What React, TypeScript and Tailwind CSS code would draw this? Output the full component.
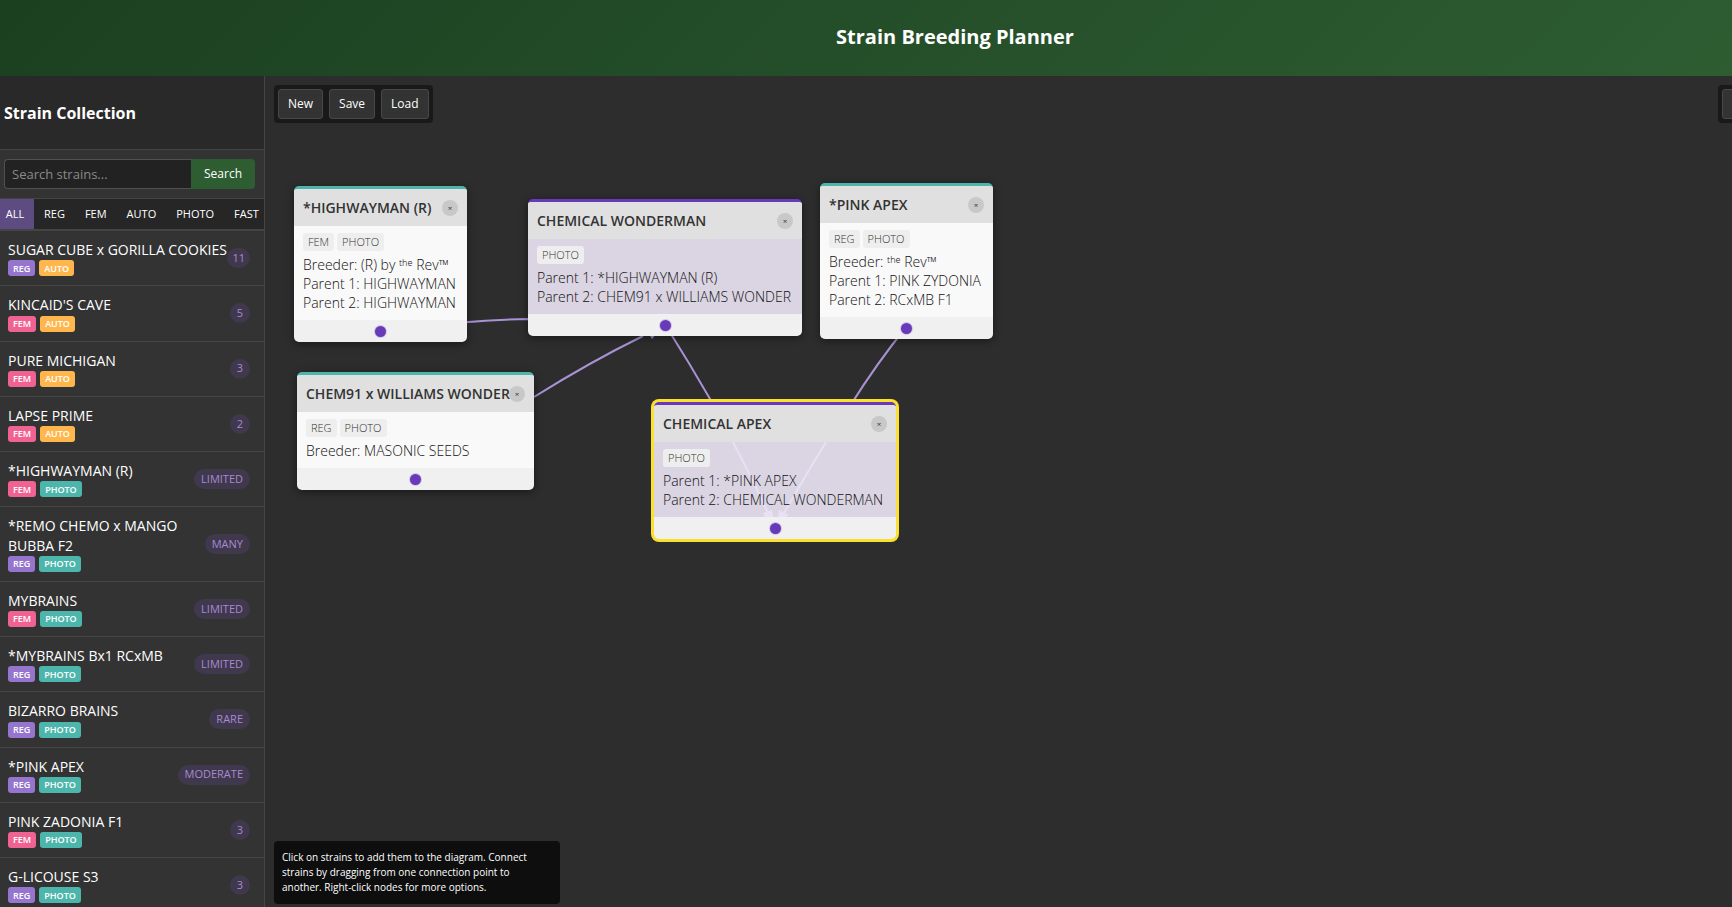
import React from "react";

type Kind = "REG" | "FEM" | "AUTO" | "PHOTO";

const tagColor: Record<Kind, string> = {
  REG: "bg-[#9575cd]",
  FEM: "bg-[#f06292]",
  AUTO: "bg-[#ffb74d]",
  PHOTO: "bg-[#4db6ac]",
};

const strains: { name: string; tags: Kind[]; stock: string }[] = [
  { name: "SUGAR CUBE x GORILLA COOKIES", tags: ["REG", "AUTO"], stock: "11" },
  { name: "KINCAID'S CAVE", tags: ["FEM", "AUTO"], stock: "5" },
  { name: "PURE MICHIGAN", tags: ["FEM", "AUTO"], stock: "3" },
  { name: "LAPSE PRIME", tags: ["FEM", "AUTO"], stock: "2" },
  { name: "*HIGHWAYMAN (R)", tags: ["FEM", "PHOTO"], stock: "LIMITED" },
  { name: "*REMO CHEMO x MANGO BUBBA F2", tags: ["REG", "PHOTO"], stock: "MANY" },
  { name: "MYBRAINS", tags: ["FEM", "PHOTO"], stock: "LIMITED" },
  { name: "*MYBRAINS Bx1 RCxMB", tags: ["REG", "PHOTO"], stock: "LIMITED" },
  { name: "BIZARRO BRAINS", tags: ["REG", "PHOTO"], stock: "RARE" },
  { name: "*PINK APEX", tags: ["REG", "PHOTO"], stock: "MODERATE" },
  { name: "PINK ZADONIA F1", tags: ["FEM", "PHOTO"], stock: "3" },
  { name: "G-LICOUSE S3", tags: ["REG", "PHOTO"], stock: "3" },
];

const filters = ["ALL", "REG", "FEM", "AUTO", "PHOTO", "FAST"];

function Sidebar() {
  return (
    <aside className="flex w-[265px] shrink-0 flex-col overflow-hidden border-r border-[#444] bg-[#333]">
      <div className="flex h-[74px] shrink-0 items-center border-b border-[#444] bg-[#292929] px-1">
        <h2 className="text-base font-bold text-white">Strain Collection</h2>
      </div>
      <form className="flex shrink-0 border-b border-[#444] py-[9px] pr-[9px] pl-1" onSubmit={(e) => e.preventDefault()}>
        <input
          type="text"
          aria-label="Search strains"
          placeholder="Search strains..."
          className="h-[30px] min-w-0 flex-1 rounded-l border border-r-0 border-[#505050] bg-[#222] px-[7px] text-[13px] text-white placeholder-[#8a8a8a] outline-none"
        />
        <button className="h-[30px] w-16 rounded-r bg-[#2e5d32] text-xs font-medium text-white">Search</button>
      </form>
      <div className="flex h-8 shrink-0 overflow-hidden border-b-2 border-[#444] bg-[#262626]">
        {filters.map((f, i) => (
          <button
            key={f}
            className={
              i === 0
                ? "w-[34px] shrink-0 bg-[#5e4b82] pr-1 text-center text-[11px] text-white"
                : "shrink-0 px-[10px] text-center text-[11px] text-white"
            }
          >
            {f}
          </button>
        ))}
      </div>
      <ul className="min-h-0 flex-1 overflow-hidden">
        {strains.map((s) => (
          <li key={s.name} className="flex items-center justify-between border-b border-[#464646] py-[9px] pr-[14px] pl-2">
            <div>
              <div className="-mr-2 text-sm leading-snug text-white">{s.name}</div>
              <div className="mt-px flex gap-1">
                {s.tags.map((t) => (
                  <span key={t} className={`flex h-4 items-center rounded-[3px] px-[5px] text-[9px] font-semibold text-white ${tagColor[t]}`}>
                    {t}
                  </span>
                ))}
              </div>
            </div>
            <span
              className={`flex h-5 min-w-5 shrink-0 items-center justify-center rounded-full bg-[#40384d] text-[11px] text-[#a78bd2] ${
                s.stock.length > 2 ? "px-[7px]" : "px-[5px]"
              }`}
            >
              {s.stock}
            </span>
          </li>
        ))}
      </ul>
    </aside>
  );
}

type NodeProps = {
  title: string;
  tags: string[];
  lines: React.ReactNode[];
  place: string;
  hybrid?: boolean;
  selected?: boolean;
  children?: React.ReactNode;
};

function StrainNode({ title, tags, lines, place, hybrid, selected, children }: NodeProps) {
  return (
    <article
      className={`absolute overflow-hidden rounded-[5px] border-t-[3px] bg-[#f0f0f0] text-[#333] ${place} ${
        hybrid ? "border-[#673ab7]" : "border-[#4db6ac]"
      } ${selected ? "ring-3 ring-[#fbe030]" : "shadow-[0_2px_8px_rgba(0,0,0,0.45)]"}`}
    >
      <header className="flex h-[37px] items-center justify-between bg-[#e0e0e0] px-[9px]">
        <h3 className="min-w-0 flex-1 text-sm font-semibold whitespace-nowrap">{title}</h3>
        <button
          aria-label={`Remove ${title}`}
          className="flex size-4 shrink-0 items-center justify-center rounded-full bg-[#c8c8c8] text-[8px] text-[#333]"
        >
          ×
        </button>
      </header>
      <div className={`relative px-[9px] pt-[7px] pb-2 ${hybrid ? "bg-[#dad4e3]" : "bg-[#f9f9f9]"}`}>
        {children}
        <div className="relative mb-1 flex gap-[3px]">
          {tags.map((t) => (
            <span key={t} className="flex h-[18px] items-center rounded-[3px] bg-[#eee] px-[5px] text-[11px] font-light text-[#333]">
              {t}
            </span>
          ))}
        </div>
        {lines.map((l, i) => (
          <p key={i} className="relative text-sm/[19px] font-light whitespace-nowrap text-[#111]">
            {l}
          </p>
        ))}
      </div>
      <footer className="flex h-[22px] items-center justify-center">
        <span className="size-[11px] rounded-full bg-[#673ab7] ring-1 ring-[#d1c4e9]" />
      </footer>
    </article>
  );
}

const toolButton = "h-[30px] rounded-[3px] border border-[#484848] bg-[#333] px-[9px] text-xs font-medium text-white";

function Canvas() {
  return (
    <main className="relative min-w-0 flex-1 overflow-hidden bg-[#2d2d2d]">
      <svg className="absolute top-0 left-0 h-full w-full" fill="none" stroke="#a992d4" strokeWidth="2" aria-hidden="true">
        <path d="M115 256 C165 250 200 244 263 243 L375 247" />
        <path d="M269 321 Q325 286 378 260" />
        <path d="M401 250 Q425 288 448 328" />
        <path d="M642 250 Q612 287 585 330" />
        <path d="M384 258 L387 263 L391 258 Z" fill="#a992d4" stroke="none" />
      </svg>
      <div className="relative flex items-start justify-between pt-[9px] pl-[9px]">
        <div className="flex gap-1.5 rounded-[4px] bg-[#191919] p-1">
          <button className={toolButton}>New</button>
          <button className={toolButton}>Save</button>
          <button className={toolButton}>Load</button>
        </div>
        <div className="-mr-8 flex rounded-[4px] bg-[#191919] p-1">
          <button aria-label="Zoom in" className="h-[30px] w-[38px] rounded-[3px] border border-[#484848] bg-[#333]" />
        </div>
      </div>
      <StrainNode
        title="*HIGHWAYMAN (R)"
        tags={["FEM", "PHOTO"]}
        lines={["Breeder: (R) by ᵗʰᵉ Rev™", "Parent 1: HIGHWAYMAN", "Parent 2: HIGHWAYMAN"]}
        place="left-[29px] top-[110px] w-[173px]"
      />
      <StrainNode
        hybrid
        title="CHEMICAL WONDERMAN"
        tags={["PHOTO"]}
        lines={["Parent 1: *HIGHWAYMAN (R)", "Parent 2: CHEM91 x WILLIAMS WONDER"]}
        place="left-[263px] top-[123px] w-[274px]"
      />
      <StrainNode
        title="*PINK APEX"
        tags={["REG", "PHOTO"]}
        lines={["Breeder: ᵗʰᵉ Rev™", "Parent 1: PINK ZYDONIA", "Parent 2: RCxMB F1"]}
        place="left-[555px] top-[107px] w-[173px]"
      />
      <StrainNode
        title="CHEM91 x WILLIAMS WONDER"
        tags={["REG", "PHOTO"]}
        lines={["Breeder: MASONIC SEEDS"]}
        place="left-[32px] top-[296px] w-[237px]"
      />
      <StrainNode
        hybrid
        selected
        title="CHEMICAL APEX"
        tags={["PHOTO"]}
        lines={["Parent 1: *PINK APEX", "Parent 2: CHEMICAL WONDERMAN"]}
        place="left-[389px] top-[326px] w-[242px]"
      >
        <svg className="absolute top-0 left-0 h-[75px] w-full" fill="none" stroke="#e9e0f5" strokeWidth="2" aria-hidden="true">
          <path d="M79 0 Q98 36 114 71" />
          <path d="M172 0 Q150 36 130 71" />
          <path d="M109 71 L118 68 L119 75 L111 75 Z M125 68 L135 73 L132 75 L124 75 Z" fill="#e9e0f5" stroke="none" />
        </svg>
      </StrainNode>
      <p className="absolute bottom-[3px] left-[9px] w-[286px] rounded-[4px] bg-[#0e0e0e] py-[9px] pr-6 pl-2 text-[10px]/[15px] font-medium text-white">
        Click on strains to add them to the diagram. Connect strains by dragging from one connection point to another.
        Right-click nodes for more options.
      </p>
    </main>
  );
}

export default function App() {
  return (
    <div className="flex h-screen flex-col overflow-hidden bg-[#2d2d2d] font-['Open_Sans','Noto_Sans',sans-serif]">
      <header className="flex h-[76px] shrink-0 items-center justify-center bg-linear-135 from-[#1b4020] to-[#2e5d32] pb-0.5 pl-[178px]">
        <h1 className="text-xl font-bold text-white">Strain Breeding Planner</h1>
      </header>
      <div className="flex min-h-0 flex-1">
        <Sidebar />
        <Canvas />
      </div>
    </div>
  );
}
